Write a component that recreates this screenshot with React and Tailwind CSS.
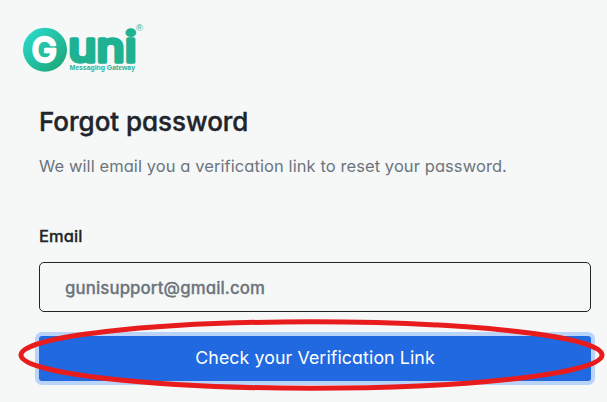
function Logo() {
  return (
    <svg className="block h-[56px] w-[130px]" viewBox="20 20 130 56" role="img" aria-label="Guni Messaging Gateway">
      <defs>
        <linearGradient id="badge" x1="0" y1="0" x2="1" y2="1">
          <stop offset="0.1" stopColor="#2ad8c8" />
          <stop offset="0.85" stopColor="#1dab80" />
        </linearGradient>
      </defs>
      <circle cx="45" cy="49.7" r="22" fill="url(#badge)" />
      <g fontFamily="Inter, sans-serif" strokeLinejoin="round">
        <text x="31.6" y="62" fontSize="34" fontWeight="500" textLength="25.5" lengthAdjust="spacingAndGlyphs" fill="#fff" stroke="#fff" strokeWidth="2.4">G</text>
        <text x="68.2" y="62" fontSize="41" fontWeight="500" textLength="68.5" lengthAdjust="spacingAndGlyphs" fill="#1fb292" stroke="#1fb292" strokeWidth="3.6">uni</text>
      </g>
      <text x="69.5" y="70.3" fontSize="6.5" fontFamily="Liberation Sans, sans-serif" fontWeight="700" textLength="65.5" lengthAdjust="spacingAndGlyphs" fill="#1fb292">Messaging Gateway</text>
      <text x="136" y="31" fontSize="9" fontFamily="Liberation Sans, sans-serif" textLength="7" lengthAdjust="spacingAndGlyphs" fill="#1fb292">®</text>
    </svg>
  );
}

export default function App() {
  return (
    <main className="relative h-[402px] w-[607px] overflow-hidden bg-[#f6f8f8] pl-[39px] pr-4 pt-5 font-['Inter',sans-serif] [font-feature-settings:'cv11'_1]">
      <div className="-ml-[19px]">
        <Logo />
      </div>
      <h1 className="mt-[27px] whitespace-nowrap text-[26px] font-medium leading-[38px] tracking-[-0.03px] text-[#212529] [-webkit-text-stroke:0.4px_#212529]">Forgot password</h1>
      <p className="mt-[13px] whitespace-nowrap text-[16.5px] leading-6 tracking-[0.08px] text-[#6c757d]">
        We will email you a verification link to reset your password.
      </p>
      <form onSubmit={(e) => e.preventDefault()}>
        <label htmlFor="email" className="mt-[46px] block w-fit text-[16.5px] font-medium leading-6 tracking-[0.1px] text-[#212529] [-webkit-text-stroke:0.3px_#212529]">Email</label>
        <input
          id="email"
          type="email"
          placeholder="gunisupport@gmail.com"
          className="mt-[14px] block h-[50px] w-full rounded-[5px] border border-[#212529] bg-transparent px-[25px] pt-[2px] text-[16.75px] font-medium tracking-[0.13px] text-[#6c757d] outline-none [-webkit-text-stroke:0.3px_#6c757d] [font-feature-settings:'cv11'_1] placeholder:text-[#6c757d] placeholder:opacity-100"
        />
        <button className="mt-6 block h-[45px] w-full rounded-[3px] bg-[#2169e1] text-[17.75px] tracking-[0.1px] text-white ring-4 ring-[#bad3f9] [font-feature-settings:'cv11'_1]">
          <span>Check your Verification Link</span>
        </button>
      </form>
      <svg className="pointer-events-none absolute inset-0" width="607" height="402" aria-hidden="true">
        <ellipse cx="311.5" cy="355" rx="290.5" ry="33.2" fill="none" stroke="#e81c1c" strokeWidth="5" />
      </svg>
    </main>
  );
}
